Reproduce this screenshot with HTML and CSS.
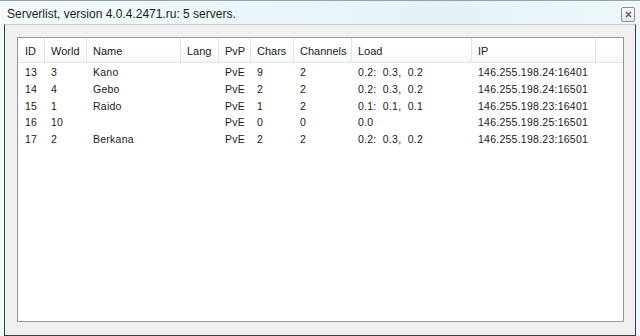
FILE: index.html
```html
<!DOCTYPE html>
<html lang="en">
<head>
  <meta charset="UTF-8">
  <title>Serverlist</title>
  <link rel="stylesheet" href="styles.css">
</head>
<body>
  <div class="window">
    <div class="titlebar">
      <span class="title">Serverlist, version 4.0.4.2471.ru: 5 servers.</span>
      <div class="close-btn">
        <svg width="7" height="7" viewBox="0 0 7 7">
          <path d="M1 1 L6 6 M6 1 L1 6" stroke="#5a5a5a" stroke-width="1.4" fill="none"/>
        </svg>
      </div>
    </div>
    <div class="client">
      <div class="listview">
        <div class="lv-header">
          <div class="hcell first">ID</div>
          <div class="hcell">World</div>
          <div class="hcell">Name</div>
          <div class="hcell">Lang</div>
          <div class="hcell">PvP</div>
          <div class="hcell">Chars</div>
          <div class="hcell">Channels</div>
          <div class="hcell">Load</div>
          <div class="hcell">IP</div>
          <div class="hcell filler"></div>
        </div>
        <div class="lv-body" id="rows"></div>
      </div>
    </div>
  </div>

  <script>
    const servers = [
      ['13', '3', 'Kano', '', 'PvE', '9', '2', '0.2:  0.3,  0.2', '146.255.198.24:16401'],
      ['14', '4', 'Gebo', '', 'PvE', '2', '2', '0.2:  0.3,  0.2', '146.255.198.24:16501'],
      ['15', '1', 'Raido', '', 'PvE', '1', '2', '0.1:  0.1,  0.1', '146.255.198.23:16401'],
      ['16', '10', '', '', 'PvE', '0', '0', '0.0', '146.255.198.25:16501'],
      ['17', '2', 'Berkana', '', 'PvE', '2', '2', '0.2:  0.3,  0.2', '146.255.198.23:16501']
    ];

    const rows = document.getElementById('rows');
    servers.forEach(server => {
      const row = document.createElement('div');
      row.className = 'lv-row';
      server.forEach((value, i) => {
        const cell = document.createElement('div');
        cell.className = i === 0 ? 'cell first' : 'cell';
        cell.textContent = value;
        row.appendChild(cell);
      });
      rows.appendChild(row);
    });
  </script>
</body>
</html>
```

FILE: styles.css
```css
html, body {
  margin: 0;
  padding: 0;
  width: 100%;
  height: 100%;
  overflow: hidden;
  background: #eaf5f8;
  font-family: 'Liberation Sans', Arial, sans-serif;
}

.window {
  display: flex;
  flex-direction: column;
  width: 640px;
  height: 336px;
  box-sizing: border-box;
  border-top: 1px solid #9aa3a8;
  background: linear-gradient(90deg, #f4fafc 0%, #eaf6f9 40%, #e4f3f7 70%, #eef8fa 100%);
}

.titlebar {
  display: flex;
  align-items: center;
  justify-content: space-between;
  height: 23px;
  padding: 0 5px 0 7px;
}

.title {
  font-size: 12px;
  color: #1e1e1e;
  margin-top: 3px;
}

.close-btn {
  display: flex;
  align-items: center;
  justify-content: center;
  width: 12px;
  height: 13px;
  margin-top: 3px;
  border: 1px solid #8a8f94;
  border-radius: 2px;
  background: linear-gradient(#fbfcfd, #e4e8ec);
}

.client {
  flex: 1;
  display: flex;
  margin: 0 4px 0 4px;
  padding: 12px 11px 13px 12px;
  background: #f0f0f0;
  border: 1px solid #3c3c3c;
  border-top-color: #c9d0d4;
}

.listview {
  flex: 1;
  background: #fff;
  border: 1px solid #8f969c;
  border-bottom-color: #9a9fa5;
}

.lv-header, .lv-row {
  display: grid;
  grid-template-columns: 27px 42px 94px 38px 32px 43px 58px 120px 124px 1fr;
}

.lv-header {
  height: 24px;
  border-bottom: 1px solid #e2e4e7;
  background: linear-gradient(#ffffff 0%, #ffffff 55%, #f5f6f8 100%);
  margin-bottom: 1px;
}

.hcell {
  display: flex;
  align-items: center;
  padding: 2px 0 0 6px;
  font-size: 11px;
  color: #222;
  border-right: 1px solid #e4e6e9;
  white-space: nowrap;
  overflow: hidden;
}

.hcell.first {
  padding-left: 7px;
}

.hcell.filler {
  border-right: none;
}

.lv-row {
  height: 16.7px;
}

.cell {
  display: flex;
  align-items: center;
  padding-left: 6px;
  font-size: 10.5px;
  letter-spacing: 0.25px;
  color: #1a1a1a;
  white-space: pre;
  overflow: hidden;
}

.cell.first {
  padding-left: 7px;
}
```
